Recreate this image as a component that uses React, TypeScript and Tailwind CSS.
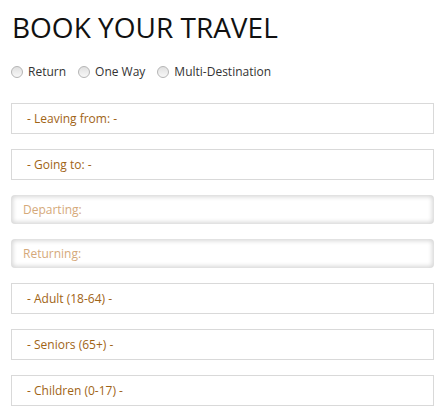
import React from "react";

const selects = ["- Leaving from: -", "- Going to: -"];
const pax = ["- Adult (18-64) -", "- Seniors (65+) -", "- Children (0-17) -"];

function SelectBox({ label }: { label: string }) {
  return (
    <div className="h-[31px] border border-[#d9d9d9] bg-white flex items-center pl-[15px] text-[12px] text-[#9f6416]">
      {label}
    </div>
  );
}

function DateBox({ label }: { label: string }) {
  return (
    <div className="h-[29px] rounded-[4px] bg-white flex items-center pl-[12px] text-[12px] text-[#d5a97a] shadow-[inset_0_0_4px_2px_#d8d8d8]">
      {label}
    </div>
  );
}

function Radio({ label }: { label: string }) {
  return (
    <label className="flex items-center gap-[5px]">
      <span className="w-[12px] h-[12px] rounded-full border border-[#b5b5b5] bg-gradient-to-b from-[#e0e0e0] to-[#f8f8f8]" />
      <span>{label}</span>
    </label>
  );
}

export default function App() {
  return (
    <div className="w-[448px] h-[420px] bg-white px-[11px] pt-[10px] font-['Open_Sans',sans-serif] overflow-hidden">
      <h1 className="text-[28px] leading-[34px] text-[#111] font-normal pl-[1px]">BOOK YOUR TRAVEL</h1>
      <div className="flex items-center gap-[12px] mt-[19px] text-[12px] text-[#333]">
        <Radio label="Return" />
        <Radio label="One Way" />
        <Radio label="Multi-Destination" />
      </div>
      <div className="w-[423px] flex flex-col gap-[15px] mt-[22px]">
        {selects.map((s) => (
          <SelectBox key={s} label={s} />
        ))}
        <DateBox label="Departing:" />
        <DateBox label="Returning:" />
        {pax.map((s) => (
          <SelectBox key={s} label={s} />
        ))}
      </div>
    </div>
  );
}
